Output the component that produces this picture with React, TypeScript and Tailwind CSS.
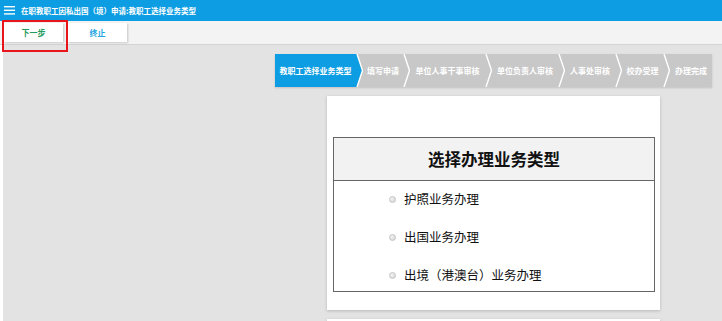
import React from "react";

const BLUE = "#0c9de2";
const GRAY = "#c8c8c8";

const steps = [
  { label: "教职工选择业务类型", w: 81, active: true },
  { label: "填写申请", w: 40 },
  { label: "单位人事干事审核", w: 75 },
  { label: "单位负责人审核", w: 66 },
  { label: "人事处审核", w: 50 },
  { label: "校办受理", w: 41 },
  { label: "办理完成", w: 42 },
];

function Sep({ left, right }: { left: string; right: string }) {
  return (
    <svg width="7" height="33" viewBox="0 0 7 33" className="shrink-0 block">
      <polygon points="0,0 1,0 6.5,16.5 1,33 0,33" fill={left} />
      <polygon points="1,0 7,0 7,33 1,33 6.5,16.5" fill={right} />
      <polyline points="1,0 6.5,16.5 1,33" fill="none" stroke="#ffffff" strokeWidth="1.4" />
    </svg>
  );
}

const options = ["护照业务办理", "出国业务办理", "出境（港澳台）业务办理"];

export default function App() {
  const font = { fontFamily: '"Noto Sans CJK SC", "Noto Sans", sans-serif' };
  return (
    <div className="w-[722px] h-[321px] overflow-hidden bg-[#e3e3e3] relative" style={font}>
      {/* top bar */}
      <div className="h-[21px] bg-[#0c9de2] flex items-center pl-[4px]">
        <svg width="11" height="9" viewBox="0 0 11 9" className="block">
          <rect x="0" y="0" width="11" height="1.4" fill="#fff" />
          <rect x="0" y="3.6" width="11" height="1.4" fill="#fff" />
          <rect x="0" y="7.2" width="11" height="1.4" fill="#fff" />
        </svg>
        <span className="ml-[6px] text-white font-bold text-[7.5px] leading-none">
          在职教职工因私出国（境）申请:教职工选择业务类型
        </span>
      </div>
      {/* toolbar */}
      <div className="h-[24px] bg-[#f3f3f3] border-b border-[#d4d4d4] flex items-center pl-[4px] gap-[5px]">
        <div className="w-[59px] h-[19px] bg-white shadow-[1px_1px_2px_rgba(0,0,0,0.18)] flex items-center justify-center text-[8px] font-bold text-[#279c5c]">
          下一步
        </div>
        <div className="w-[59px] h-[19px] bg-white shadow-[1px_1px_2px_rgba(0,0,0,0.18)] flex items-center justify-center text-[8px] font-bold text-[#25a6e0]">
          终止
        </div>
      </div>
      {/* red highlight */}
      <div className="absolute left-[2px] top-[20px] w-[66px] h-[32px] border-2 border-[#e8161b]" />

      {/* main */}
      <div className="flex">
        <div className="w-[3px] self-stretch bg-white" />
        <div className="flex-1 flex justify-end pr-[10px]">
          <div className="w-[437px] mt-[9px]">
            <div className="flex h-[33px] shadow-[0_1px_2px_rgba(0,0,0,0.15)]">
              {steps.map((s, i) => (
                <React.Fragment key={s.label}>
                  {i > 0 && <Sep left={i === 1 ? BLUE : GRAY} right={GRAY} />}
                  <div
                    className={
                      "h-[33px] flex items-center justify-center text-white font-bold text-[8px] whitespace-nowrap shrink-0 " +
                      (s.active ? "bg-[#0c9de2]" : "bg-[#c8c8c8]")
                    }
                    style={{ width: s.w }}
                  >
                    {s.label}
                  </div>
                </React.Fragment>
              ))}
            </div>
            <div className="w-[333px] mx-auto mt-[9px] bg-white shadow-[0_1px_3px_rgba(0,0,0,0.2)] pt-[41px] pb-[18px] pl-[6px] pr-[5px]">
              <div className="border border-[#666666]">
                <div className="h-[43px] bg-[#f2f2f2] border-b border-[#666666] flex items-center justify-center text-[16.5px] font-bold text-[#111]">
                  选择办理业务类型
                </div>
                <div className="pt-[8px] pb-[6px] pl-[55px] flex flex-col gap-[18px]">
                  {options.map((o) => (
                    <div key={o} className="h-[20px] flex items-center">
                      <span className="w-[7px] h-[7px] rounded-full border border-[#c4c4c4] bg-[radial-gradient(circle_at_35%_35%,#f4f4f4,#d0d0d0)]" />
                      <span className="ml-[8px] text-[12.5px] text-[#111] leading-none">{o}</span>
                    </div>
                  ))}
                </div>
              </div>
            </div>
            <div className="w-[333px] mx-auto mt-[9px] h-[20px] bg-white shadow-[0_1px_3px_rgba(0,0,0,0.2)]" />
          </div>
        </div>
      </div>
    </div>
  );
}
